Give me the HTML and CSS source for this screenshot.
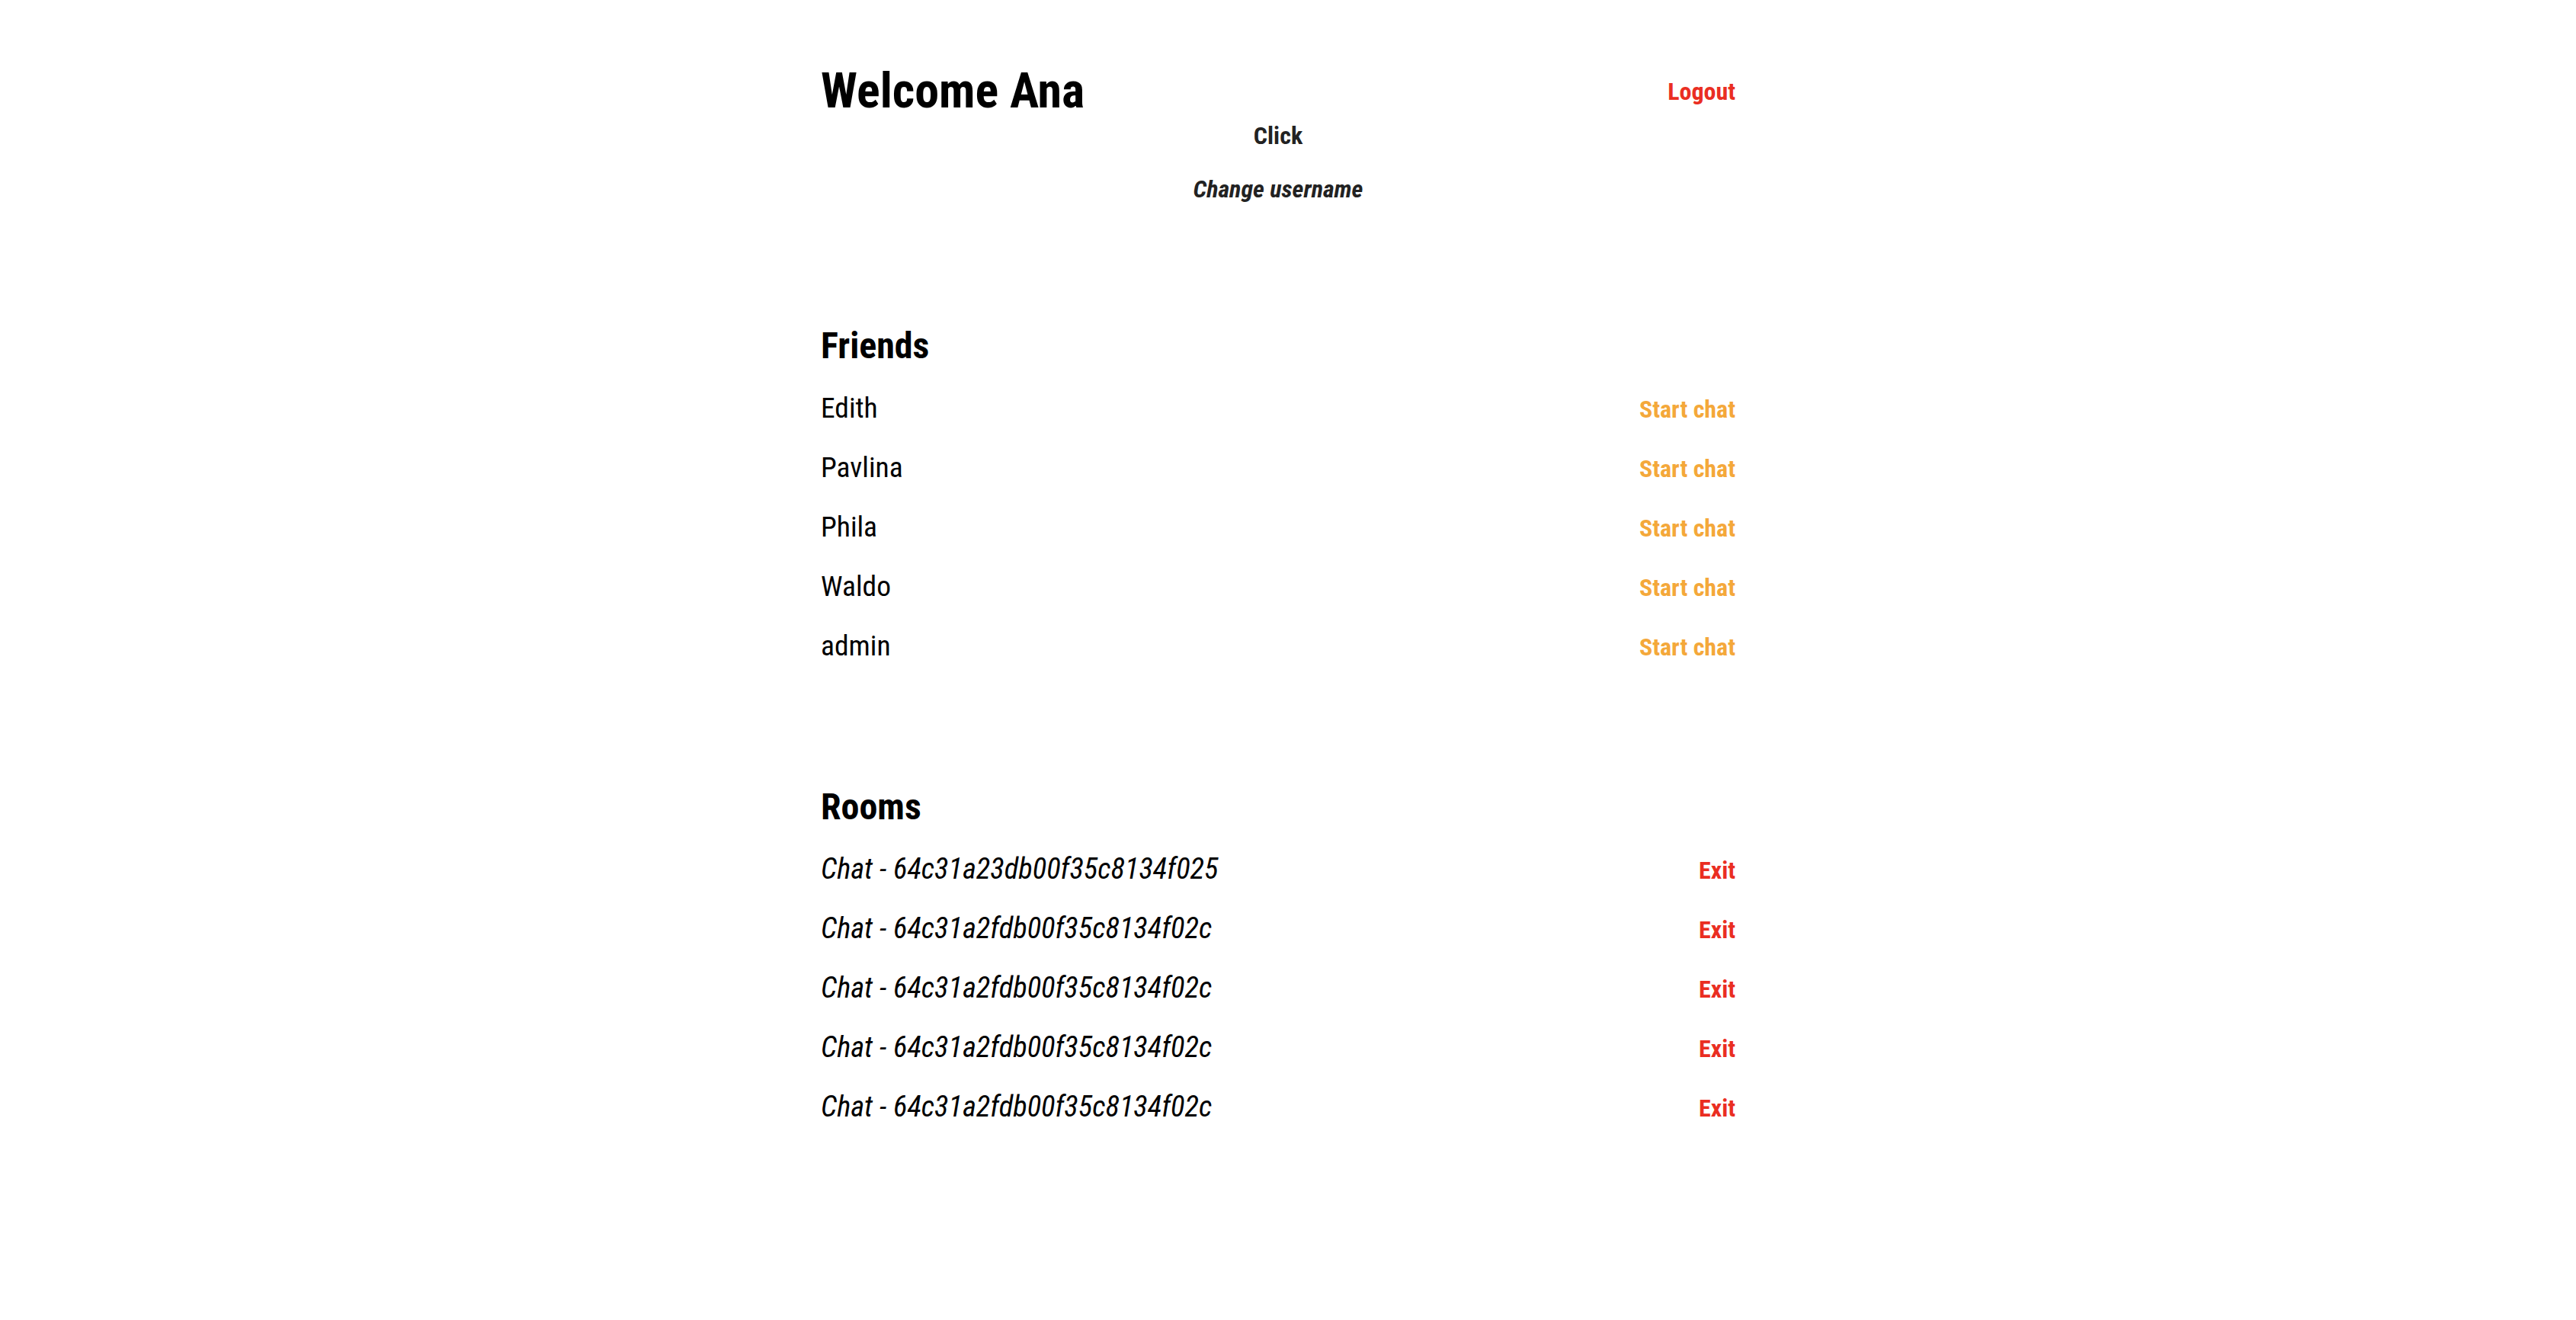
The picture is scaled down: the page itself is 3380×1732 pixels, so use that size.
FILE: index.html
```html
<!DOCTYPE html>
<html lang="en">
<head>
    <meta charset="UTF-8">
    <meta name="viewport" content="width=device-width, initial-scale=1.0">
    <title>Chat</title>
    <link rel="stylesheet" href="styles.css">
</head>
<body>
    <div class="page">
        <div class="header">
            <h1>Welcome Ana</h1>
            <a href="#" class="logout">Logout</a>
        </div>
        <div class="account">
            <span class="click">Click</span>
            <span class="change-name">Change username</span>
        </div>

        <div class="section friends">
            <h2>Friends</h2>
            <div class="row"><span class="name">Edith</span><a href="#" class="start">Start chat</a></div>
            <div class="row"><span class="name">Pavlina</span><a href="#" class="start">Start chat</a></div>
            <div class="row"><span class="name">Phila</span><a href="#" class="start">Start chat</a></div>
            <div class="row"><span class="name">Waldo</span><a href="#" class="start">Start chat</a></div>
            <div class="row"><span class="name">admin</span><a href="#" class="start">Start chat</a></div>
        </div>

        <div class="section rooms">
            <h2>Rooms</h2>
            <div class="row"><span class="room">Chat - 64c31a23db00f35c8134f025</span><a href="#" class="exit">Exit</a></div>
            <div class="row"><span class="room">Chat - 64c31a2fdb00f35c8134f02c</span><a href="#" class="exit">Exit</a></div>
            <div class="row"><span class="room">Chat - 64c31a2fdb00f35c8134f02c</span><a href="#" class="exit">Exit</a></div>
            <div class="row"><span class="room">Chat - 64c31a2fdb00f35c8134f02c</span><a href="#" class="exit">Exit</a></div>
            <div class="row"><span class="room">Chat - 64c31a2fdb00f35c8134f02c</span><a href="#" class="exit">Exit</a></div>
        </div>
    </div>
</body>
</html>
```
FILE: styles.css
```css
body {
    margin: 0 26px 0 0;
    font-family: "Roboto Condensed", Roboto, sans-serif;
    font-stretch: 75%;
    color: #000;
    background: #fff;
}
a {
    text-decoration: none;
    font-weight: 700;
    font-size: 32px;
    line-height: 40px;
}
.page {
    width: 1200px;
    margin: 0 auto;
    padding-top: 81px;
}
.header {
    display: flex;
    justify-content: space-between;
    align-items: center;
    height: 78px;
}
h1 {
    margin: 0;
    font-size: 64px;
    line-height: 78px;
    font-weight: 700;
}
.logout {
    color: #ea2e22;
}
.account {
    display: flex;
    flex-direction: column;
    align-items: center;
    gap: 30px;
    margin-top: -1px;
    color: #222;
    font-weight: 700;
    font-size: 32px;
    line-height: 40px;
}
.change-name {
    font-style: italic;
}
.section {
    margin-top: 156px;
}
.rooms {
    margin-top: 143px;
}
h2 {
    margin: 0 0 12px;
    font-size: 48px;
    line-height: 60px;
    font-weight: 700;
}
.row {
    display: flex;
    justify-content: space-between;
    align-items: baseline;
    height: 78px;
    line-height: 78px;
}
.name {
    font-size: 37.5px;
}
.room {
    font-size: 38.5px;
    font-style: italic;
}
.start {
    color: #f4a83a;
}
.exit {
    color: #ea2e22;
}
```
